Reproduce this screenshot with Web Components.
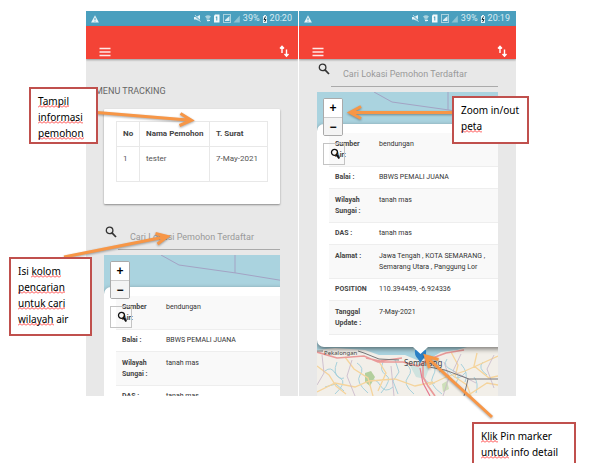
<!DOCTYPE html>
<html lang="id">
<head>
<meta charset="utf-8">
<title>Panduan Tracking</title>
<style>
html, body { margin: 0; background: #fff; }
</style>
</head>
<body>
<guide-page></guide-page>

<script>
const define = (name, html, setup) => {
  const tpl = document.createElement('template');
  tpl.innerHTML = html;
  customElements.define(name, class extends HTMLElement {
    constructor() {
      super();
      this.attachShadow({ mode: 'open' }).append(tpl.content.cloneNode(true));
    }
    connectedCallback() { if (setup) setup(this, this.shadowRoot); }
  });
};

define('status-bar', `
<style>
:host { display: flex; align-items: center; justify-content: flex-end; height: 15px; padding: 0 6px 0 5px; gap: 3px;
  background: #4a9fbe; color: #d9ecf2; font: 9px/15px Roboto, sans-serif; }
.warn { margin-right: auto; }
svg { display: block; flex: none; }
</style>
<svg class="warn" width="8" height="8" viewBox="0 0 8 8"><path d="M4 0.3L7.9 7.6H0.1Z" fill="#e6f3f7"/><path d="M4 2.8V5M4 5.7V6.6" stroke="#4a9fbe" stroke-width="1"/></svg>
<svg width="46" height="9" viewBox="0 0 46 9">
  <path d="M0 3H2L6 1V7.5L2 5.5H0Z" fill="#e6f3f7"/><path d="M0.5 0.8L6.8 7.8" stroke="#4a9fbe" stroke-width="1.4"/><path d="M1 1L6.5 7.6" stroke="#e6f3f7" stroke-width=".7"/>
  <path d="M11 2.4Q14 0 17 2.4L14 6Z" fill="#a9d2df"/><path d="M12 4.5L14 8.5L16 4.5" fill="#8cc2d3"/><path d="M13 6.5H16" stroke="#e6f3f7"/>
  <path d="M21 0.5H25.5V8.5H20V1.8Z" fill="#f2f9fb"/><path d="M22.8 2.5V6.5M21.8 3.3H23" stroke="#4a9fbe"/>
  <rect x="29.5" y="0.5" width="7" height="8" fill="none" stroke="#a9d2df"/><path d="M31 7V6L35.5 2V7Z" fill="#d9ecf2"/>
  <path d="M39.5 8.5L45.8 1.5V8.5Z" fill="#8cc2d3"/>
</svg>
<span>39%</span>
<svg width="4" height="8" viewBox="0 0 4 8"><path d="M0 1H1V0H3V1H4V8H0Z" fill="#e6f3f7"/><path d="M2.6 1.5L1 4.5H3L1.6 7" fill="none" stroke="#1b3038"/></svg>
<span><slot></slot></span>`);

define('app-bar', `
<style>
:host { display: flex; align-items: flex-end; justify-content: space-between; height: 33px; box-sizing: border-box; padding: 0 8px 1px 13px;
  background: #f44336; box-shadow: 0 1px 2px rgba(0,0,0,.35); position: relative; }
button { display: block; border: 0; padding: 0; background: none; color: #fff; }
svg { display: block; }
</style>
<button aria-label="Menu"><svg width="12" height="11" viewBox="0 0 12 11"><path d="M0.5 1.5H11.5M0.5 5H11.5M0.5 8.5H11.5" stroke="#ffe9e7" stroke-width="1.3"/></svg></button>
<button aria-label="Urutkan"><svg width="11" height="13" viewBox="0 0 11 13"><path d="M3 8V1.5M1 3.5L3 1.2L5 3.5M7.5 4.5V11M5.5 9L7.5 11.3L9.5 9" fill="none" stroke="#fff" stroke-width="1.4"/></svg></button>`);

define('tracking-card', `
<style>
:host { display: block; height: 95px; box-sizing: border-box; padding: 12px; background: #fff; border-radius: 1px; box-shadow: 0 1px 2px rgba(0,0,0,.4); }
table { width: 100%; border-collapse: collapse; font: 8px/12px Roboto, sans-serif; color: #555; border: 1px solid #ddd; table-layout: fixed; }
th, td { text-align: left; vertical-align: top; padding: 6px 0 6px 6px; border: 1px solid #e8e8e8; box-sizing: border-box; }
th { height: 25px; color: #444; font-weight: 700; }
td { height: 35px; }
.no { width: 23px; } .date { width: 58px; }
</style>
<table>
  <thead><tr><th class="no">No</th><th>Nama Pemohon</th><th class="date">T. Surat</th></tr></thead>
  <tbody><tr><td>1</td><td>tester</td><td>7-May-2021</td></tr></tbody>
</table>`);

define('search-field', `
<style>
:host { display: block; }
label { display: flex; align-items: flex-start; height: 24px; }
svg { flex: none; margin: 0 1px; }
input { flex: 1; min-width: 0; height: 24px; box-sizing: border-box; border: 0; border-bottom: 1px solid #aaa; background: none;
  padding: 0 0 2px 12px; margin: 0; outline: 0; font: 9px/12px Roboto, sans-serif; color: #555; }
input::placeholder { color: #999; opacity: 1; }
</style>
<label>
  <svg width="12" height="12" viewBox="0 0 12 12"><circle cx="4.6" cy="4.4" r="3.3" fill="none" stroke="#333" stroke-width="1.3"/><path d="M7 6.9L11 11" stroke="#333" stroke-width="1.7"/></svg>
  <input type="search" aria-label="Cari Lokasi Pemohon Terdaftar" placeholder="Cari Lokasi Pemohon Terdaftar">
</label>`);

const DETAILS = [
  ['Sumber<br>Air:', 'bendungan'],
  ['Balai :', 'BBWS PEMALI JUANA'],
  ['Wilayah<br>Sungai :', 'tanah mas'],
  ['DAS :', 'tanah mas'],
  ['Alamat :', 'Jawa Tengah , KOTA SEMARANG ,<br>Semarang Utara , Panggung Lor'],
  ['POSITION', '110.394459, -6.924336'],
  ['Tanggal<br>Update :', '7-May-2021'],
];

define('map-popup', `
<style>
:host { display: block; background: #fff; border-radius: 7px; box-shadow: 0 2px 5px rgba(0,0,0,.5); padding: 9px 0 12px 12px; }
table { width: 100%; border-collapse: collapse; font: 7px/11px Roboto, sans-serif; color: #333; }
th, td { text-align: left; vertical-align: top; padding: 5px 0 5px 6px; border-bottom: 1px solid #eee; }
th { width: 38px; font-weight: 700; color: #444; }
tr:nth-child(odd) { background: #f9f9f9; }
tr:nth-child(odd) > * { padding-top: 6px; }
</style>
<table><tbody></tbody></table>`, (el, r) => {
  const count = Number(el.getAttribute('rows')) || DETAILS.length;
  r.querySelector('tbody').innerHTML = DETAILS.slice(0, count)
    .map(([k, v]) => '<tr><th scope="row">' + k + '</th><td>' + v + '</td></tr>').join('');
});

define('map-view', `
<style>
:host { display: block; position: relative; overflow: hidden; background: #aad3df; }
.tiles { position: absolute; left: 0; top: 0; width: 181px; height: 304px; min-width: 100%; }
::slotted(map-popup) { position: absolute; left: 0; top: 32px; width: calc(100% + 14px); box-sizing: border-box; }
.tip { position: absolute; left: 96px; top: 255px; }
.zoom { position: absolute; left: 6px; top: 6px; width: 20px; box-sizing: border-box; border: 1px solid #aaa; border-radius: 2px; background: #fff; overflow: hidden; }
.zoom button { display: block; width: 100%; height: 18px; padding: 0; border: 0; background: #fff; color: #000; font: 700 12px/18px "Liberation Sans", sans-serif; }
.zoom button + button { border-top: 1px solid #ccc; background: #f4f4f4; }
.find { position: absolute; left: 6px; top: 51px; width: 22px; height: 22px; padding: 0; border: 1px solid #c4c4c4; background: none; }
.find svg { display: block; margin: 0 0 0 6px; }
</style>
<svg class="tiles" viewBox="0 0 181 304" preserveAspectRatio="xMidYMin slice">
  <path d="M57 0L75 10L132 18L181 26M131 0V18" fill="none" stroke="#a3a3c4" stroke-width="1"/>
  <path d="M0 258L18 256L48 258L62 263L88 263L100 268L114 266L124 260L140 258L160 252H181V304H0Z" fill="#f2efe9"/>
  <path d="M8 279q6 -5 10 2t9 5M20 270q-5 12 3 16t-5 16M40 271q8 5 3 12t8 18M66 270q-4 9 3 13t-5 18M78 268l4 12l-6 9l5 13M89 272q8 6 2 13t6 17M95 275q9 -4 11 7t12 9M114 270q7 6 2 14t9 18M130 267q-5 7 5 11t4 13M144 272q8 9 4 18M157 285q5 6 2 16M166 270q-6 6 4 13M50 291q8 -7 13 2t13 2M122 280q7 -4 13 3t14 -3M8 295l11 -3l8 7" fill="none" stroke="#a7d1dc" stroke-width="1"/>
  <path d="M91 270q4 7 9 2t12 5l-4 10l-9 -2z" fill="#cfe3df"/>
  <path d="M48 281l6 -2l4 6l-5 9l-5 -4z" fill="#b3cf9d"/><path d="M125 292l5 -3l2 8l-6 3z" fill="#cddfb9"/>
  <path d="M0 274l12 9l7 11l10 8M28 265l9 12l14 9l5 18M61 268l8 13l-8 18M0 300l18 -9l20 4l14 -6l26 -2l20 7l18 -4M134 260l7 13l-3 12l12 8l4 11M112 293l17 -8l19 -6l33 -15M160 261l-3 13l15 12l9 -2M150 304l20 -13l11 2" fill="none" stroke="#f5d49c" stroke-width="1.3"/>
  <path d="M5 263l2 18l-7 12M35 268l-5 16l8 20M74 274l3 30M127 270l5 15l-6 19M144 262l-8 17l23 12M177 263l-7 14l7 19" fill="none" stroke="#c6b5c9" stroke-width=".8"/>
  <path d="M0 260L20 266L47 264L61 270L86 270L101 274L110 268L129 261L147 258M106 272L106 285L111 294L118 304M49 266l14 3l22 -3" fill="none" stroke="#ea9a99" stroke-width="1.7"/>
  <path d="M103 276l3 15l7 13" fill="none" stroke="#e67990" stroke-width="1.2"/>
  <path d="M0 259H6M41 259L47 261L62 267L82 268M112 275L128 278L152 287H181M151 287L147 304" fill="none" stroke="#77777a" stroke-width="1"/>
  <g class="places" fill="#444" font-family="Noto Sans, sans-serif"><text x="7" y="263" font-size="6">Pekalongan</text><text x="87" y="274" font-size="8">Semarang</text></g>
</svg>
<slot></slot>
<svg class="tip" width="16" height="18" viewBox="0 0 16 18"><path d="M2 3Q1 8 5 12L7.5 16L10 12Q14 8 13 3Z" fill="#2a7fc5"/><path d="M0 0H15L7.5 7Z" fill="#fff"/></svg>
<div class="zoom"><button aria-label="Perbesar">+</button><button aria-label="Perkecil">−</button></div>
<button class="find" aria-label="Cari"><svg width="11" height="12" viewBox="0 0 11 12"><circle cx="4.5" cy="4.3" r="3" fill="none" stroke="#111" stroke-width="1.3"/><path d="M6.3 6.5L9.3 10.5" stroke="#111" stroke-width="2"/></svg></button>`, (el, r) => {
  if (el.hasAttribute('plain')) r.querySelector('.places').remove();
});

define('phone-screen', `
<style>
:host { display: flex; flex-direction: column; min-width: 0; min-height: 0; overflow: hidden; background: #e8e8e8; }
main { flex: 1; min-height: 0; display: flex; flex-direction: column; padding: 4px 18px 0; }
</style>
<status-bar></status-bar><app-bar></app-bar><main><slot></slot></main>`, (el, r) => {
  r.querySelector('status-bar').textContent = el.getAttribute('time');
});

define('call-out', `
<style>
:host { position: absolute; display: block; box-sizing: border-box; border: 2px solid #c0504d; background: #fff; padding: 4px 7px;
  font: 10px/16px "Noto Sans", sans-serif; color: #000; white-space: nowrap; }
</style>
<slot></slot>`);

define('guide-page', `
<style>
:host { display: block; position: relative; height: 100vh; overflow: hidden; }
.screens { height: 100%; box-sizing: border-box; padding: 11px 77px 67px 86px; display: grid; grid-template: minmax(0, 1fr) / 212fr 217fr; gap: 1px; }
h1 { margin: 22px 0 12px -9px; font: 9px/12px Roboto, sans-serif; color: #666; }
tracking-card { margin-bottom: 22px; flex: none; }
search-field { margin-bottom: 5px; flex: none; }
map-view { flex: 1; min-height: 0; }
.arrows { position: absolute; left: 0; top: 0; pointer-events: none; filter: drop-shadow(0 1px 1px rgba(0,0,0,.35)); }
u { text-decoration: none; background: url("data:image/svg+xml,%3Csvg xmlns='http://www.w3.org/2000/svg' width='4' height='3'%3E%3Cpath d='M0 2.5L2 .5L4 2.5' fill='none' stroke='%23f22' stroke-width='.9'/%3E%3C/svg%3E") 0 100% repeat-x; }
.info { left: 29px; top: 87px; width: 69px; height: 57px; }
.column { left: 9px; top: 257px; width: 83px; height: 79px; }
.scale { left: 452px; top: 96px; width: 77px; height: 48px; }
.pin { left: 472px; top: 422px; width: 104px; height: 48px; }
</style>
<div class="screens">
  <phone-screen time="20:20">
    <h1>MENU TRACKING</h1>
    <tracking-card></tracking-card>
    <search-field></search-field>
    <map-view plain><map-popup rows="4"></map-popup></map-view>
  </phone-screen>
  <phone-screen time="20:19">
    <search-field></search-field>
    <map-view><map-popup></map-popup></map-view>
  </phone-screen>
</div>
<svg class="arrows" width="593" height="463" viewBox="0 0 593 463" fill="none" stroke="#f79646" stroke-width="3">
  <path d="M97 112.500L191 120.300M180.500 113.500L191.500 120.300L179.500 125.500"/>
  <path d="M64 257L167 236.500M155.500 233.500L167.500 236.400L157.500 244"/>
  <path d="M453 112.500H350M361 106.500L350 112.500L361 118.500"/>
  <path d="M492 417L426 356.500M429.500 368L425.500 356L438.500 359.500"/>
</svg>
<call-out class="info"><u>Tampil</u><br><u>informasi</u><br><u>pemohon</u></call-out>
<call-out class="column">Isi <u>kolom</u><br><u>pencarian</u><br><u>untuk cari</u><br><u>wilayah</u> air</call-out>
<call-out class="scale">Zoom in/out<br><u>peta</u></call-out>
<call-out class="pin"><u>Klik</u> Pin marker<br><u>untuk</u> info detail</call-out>`);
</script>
</body>
</html>
